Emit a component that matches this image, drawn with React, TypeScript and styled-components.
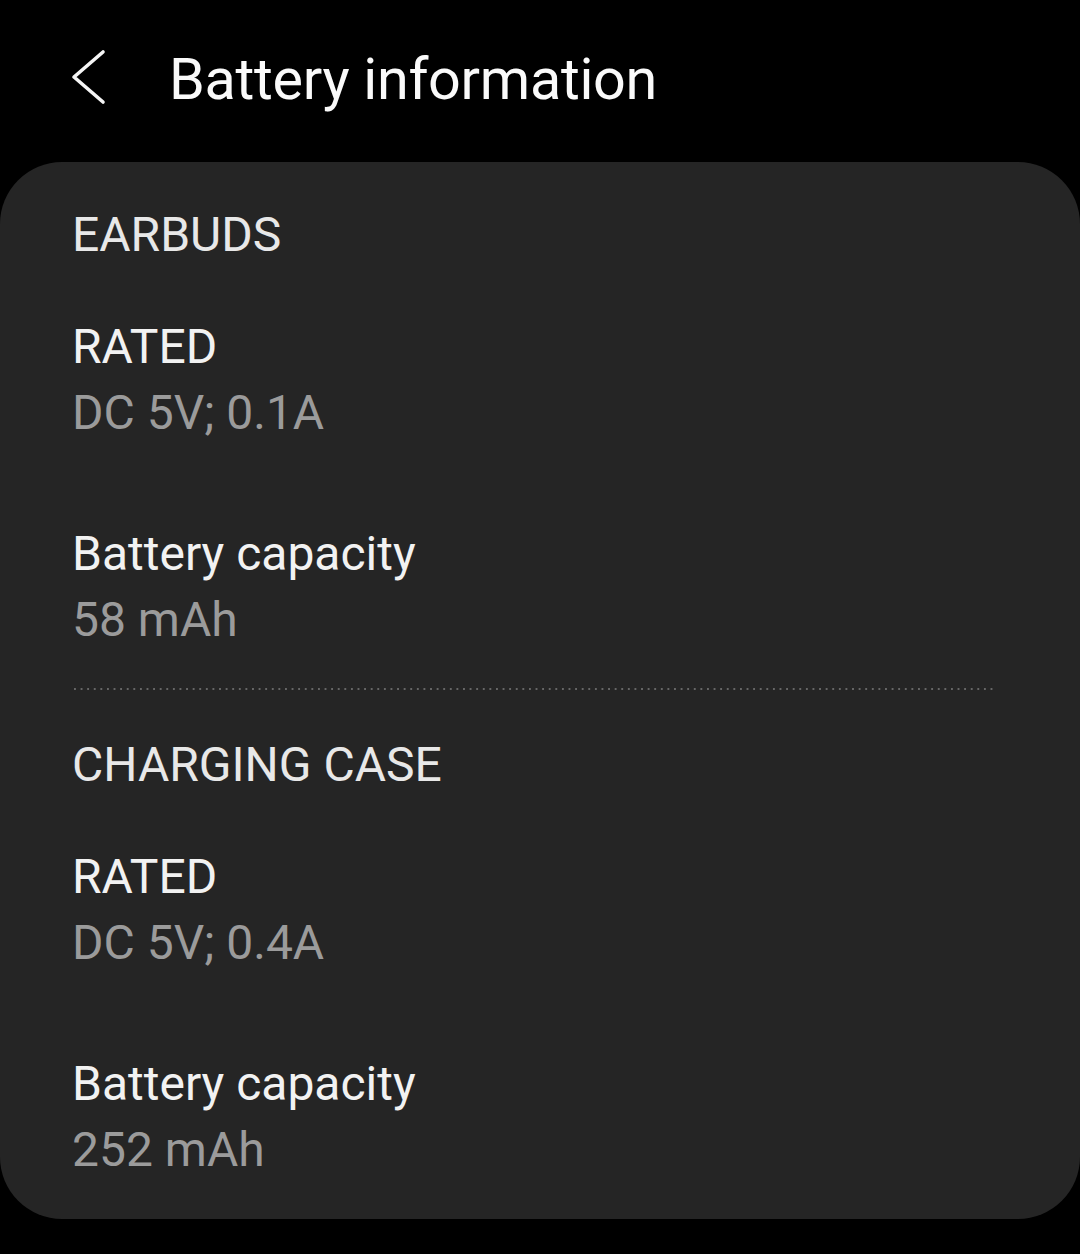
import { createGlobalStyle, styled } from 'styled-components';

const GlobalStyle = createGlobalStyle`
  html, body {
    margin: 0;
    padding: 0;
    background: #000;
  }
  body {
    font-family: Roboto, 'Noto Sans', sans-serif;
    -webkit-font-smoothing: antialiased;
  }
`;

type Spec = { label: string; value: string };
type Group = { title: string; items: Spec[] };

const groups: Group[] = [
  {
    title: 'EARBUDS',
    items: [
      { label: 'RATED', value: 'DC 5V; 0.1A' },
      { label: 'Battery capacity', value: '58 mAh' },
    ],
  },
  {
    title: 'CHARGING CASE',
    items: [
      { label: 'RATED', value: 'DC 5V; 0.4A' },
      { label: 'Battery capacity', value: '252 mAh' },
    ],
  },
];

const BackIcon = () => (
  <svg width="40" height="56" viewBox="0 0 40 56" fill="none">
    <path
      d="M33 3 L4 28 L33 53"
      stroke="#f5f5f5"
      strokeWidth="3.6"
      strokeLinecap="round"
      strokeLinejoin="round"
    />
  </svg>
);

const App = () => {
  return (
    <Styled_App.Page>
      <GlobalStyle />
      <Styled_App.Header>
        <Styled_App.Back aria-label="Back">
          <BackIcon />
        </Styled_App.Back>
        <Styled_App.Title>Battery information</Styled_App.Title>
      </Styled_App.Header>
      <Styled_App.Card>
        {groups.map((g, i) => (
          <section key={g.title}>
            {i > 0 && <Styled_App.Divider />}
            <Styled_App.GroupTitle>{g.title}</Styled_App.GroupTitle>
            <Styled_App.List>
              {g.items.map((item) => (
                <div key={item.label}>
                  <Styled_App.Label>{item.label}</Styled_App.Label>
                  <Styled_App.Value>{item.value}</Styled_App.Value>
                </div>
              ))}
            </Styled_App.List>
          </section>
        ))}
      </Styled_App.Card>
    </Styled_App.Page>
  );
};

export default App;

const Styled_App = {
  Page: styled.div`
    width: 1080px;
    height: 1254px;
    background: #000;
    display: flex;
    flex-direction: column;
    overflow: hidden;
  `,
  Header: styled.header`
    height: 160px;
    padding-bottom: 2px;
    display: flex;
    align-items: center;
    padding-left: 70px;
  `,
  Back: styled.button`
    background: none;
    border: none;
    padding: 0;
    margin: -6px 59px 0 0;
    width: 40px;
    height: 56px;
    display: flex;
    align-items: center;
  `,
  Title: styled.h1`
    margin: 0;
    font-size: 57.5px;
    font-weight: 400;
    line-height: 1;
    color: #fafafa;
    letter-spacing: -0.3px;
  `,
  Card: styled.main`
    background: #252525;
    border-radius: 62px;
    padding: 43px 0 36px 72px;
  `,
  GroupTitle: styled.h2`
    margin: 0;
    font-size: 48px;
    line-height: 60px;
    font-weight: 400;
    color: #e8e8e8;
  `,
  List: styled.div`
    display: flex;
    flex-direction: column;
    gap: 75px;
    padding-top: 49px;
  `,
  Label: styled.div`
    font-size: 48px;
    line-height: 66px;
    color: #f2f2f2;
  `,
  Value: styled.div`
    font-size: 48px;
    line-height: 66px;
    color: #9b9b9b;
  `,
  Divider: styled.div`
    height: 2px;
    margin: 35px 85px 45px 2px;
    background-image: linear-gradient(to right, #666 2px, transparent 2px);
    background-size: 6.6px 2px;
    background-repeat: repeat-x;
  `,
};
